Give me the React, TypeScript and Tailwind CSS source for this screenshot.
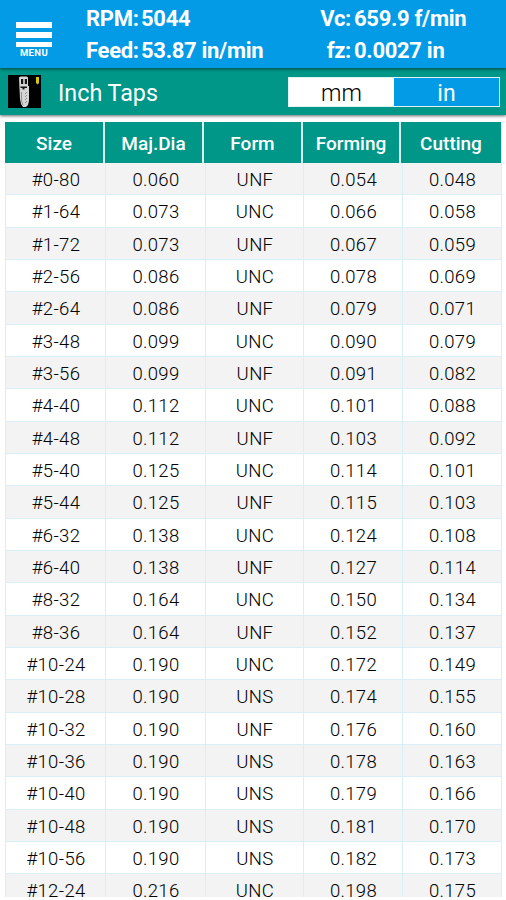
const rows: string[][] = [
  ["#0-80", "0.060", "UNF", "0.054", "0.048"],
  ["#1-64", "0.073", "UNC", "0.066", "0.058"],
  ["#1-72", "0.073", "UNF", "0.067", "0.059"],
  ["#2-56", "0.086", "UNC", "0.078", "0.069"],
  ["#2-64", "0.086", "UNF", "0.079", "0.071"],
  ["#3-48", "0.099", "UNC", "0.090", "0.079"],
  ["#3-56", "0.099", "UNF", "0.091", "0.082"],
  ["#4-40", "0.112", "UNC", "0.101", "0.088"],
  ["#4-48", "0.112", "UNF", "0.103", "0.092"],
  ["#5-40", "0.125", "UNC", "0.114", "0.101"],
  ["#5-44", "0.125", "UNF", "0.115", "0.103"],
  ["#6-32", "0.138", "UNC", "0.124", "0.108"],
  ["#6-40", "0.138", "UNF", "0.127", "0.114"],
  ["#8-32", "0.164", "UNC", "0.150", "0.134"],
  ["#8-36", "0.164", "UNF", "0.152", "0.137"],
  ["#10-24", "0.190", "UNC", "0.172", "0.149"],
  ["#10-28", "0.190", "UNS", "0.174", "0.155"],
  ["#10-32", "0.190", "UNF", "0.176", "0.160"],
  ["#10-36", "0.190", "UNS", "0.178", "0.163"],
  ["#10-40", "0.190", "UNS", "0.179", "0.166"],
  ["#10-48", "0.190", "UNS", "0.181", "0.170"],
  ["#10-56", "0.190", "UNS", "0.182", "0.173"],
  ["#12-24", "0.216", "UNC", "0.198", "0.175"],
];

const columns = ["Size", "Maj.Dia", "Form", "Forming", "Cutting"];

function Reading({ label, value }: { label: string; value: string }) {
  return (
    <div className="flex h-8 items-center gap-[3px]">
      <span className="w-[52px] text-right">{label}</span>
      <span>{value}</span>
    </div>
  );
}

function TapIcon() {
  return (
    <svg viewBox="0 0 33 33" className="h-[33px] w-[33px] bg-black">
      <path d="M11 3q0-1.500 1.500-1.500h6q1.500 0 1.500 1.500v8h1v15l-1 4-2 2h-3l-2-3-1-5z" fill="#d4d4d4" />
      <path d="M13 4h2.200v5h-2.200zM16.800 4h2.200v5h-2.200zM12.500 11.500h6.500v1.500h-2.500v1.500h-2v-1.500h-2z" fill="#151515" />
      <path d="M13.500 17v9l1.500 4M19 17l-2 2M19 20l-2 2M19 23l-2 2M19 26l-2 2" stroke="#8a8a8a" strokeWidth="0.9" fill="none" />
      <path d="M28 2h3v6l-1.500 1.500L28 8z" fill="#d6c413" />
    </svg>
  );
}

export default function App() {
  return (
    <div className="flex h-[900px] w-[506px] flex-col overflow-hidden bg-white font-[Roboto,sans-serif]">
      <header className="z-20 flex h-[68px] shrink-0 bg-[#039be5] text-[22px] font-bold tracking-[-0.3px] text-white shadow-[0_1px_3px_rgba(0,0,0,0.55)]">
        <button className="flex w-[86px] flex-col items-start pt-[22px] pl-4">
          <span className="h-[6px] w-9 bg-white" />
          <span className="mt-[4px] h-[6px] w-9 bg-white" />
          <span className="mt-[4px] h-[5px] w-9 bg-white" />
          <span className="w-9 text-center text-[9.5px] leading-[11px] tracking-[0.4px]">MENU</span>
        </button>
        <div className="w-[213px] pt-[2px] whitespace-nowrap">
          <Reading label="RPM:" value="5044" />
          <Reading label="Feed:" value="53.87 in/min" />
        </div>
        <div className="pt-[2px] whitespace-nowrap">
          <Reading label="Vc:" value="659.9 f/min" />
          <Reading label="fz:" value="0.0027 in" />
        </div>
      </header>

      <div className="z-10 flex h-[47px] shrink-0 items-center bg-[#009688] pr-[6px] pl-2 shadow-[0_1px_3px_rgba(0,0,0,0.6)]">
        <TapIcon />
        <h1 className="ml-[17px] pt-[3px] text-[23.3px] text-white">Inch Taps</h1>
        <div className="ml-auto flex h-[30px] w-[212px] border border-[#e0f2f1] text-[23px] leading-[32px]">
          <span className="h-full flex-1 bg-white text-center font-light text-black">mm</span>
          <span className="h-full flex-1 bg-[#039be5] text-center text-white">in</span>
        </div>
      </div>

      <main className="h-[782px] shrink-0 overflow-hidden pt-[7px] pl-[5px]">
        <div className="grid h-[41px] w-[497px] grid-cols-[100px_99px_99px_98px_101px] text-center text-[19px] font-medium text-white">
          {columns.map((c) => (
            <div key={c} className="h-[41px] border-r-2 border-[#d8f0ee] bg-[#009688] leading-[43px] last:border-r-[1px]">
              {c}
            </div>
          ))}
        </div>
        {rows.map((row) => (
          <div
            key={row[0]}
            className="grid h-[32.33px] w-[497px] grid-cols-[100px_100px_98px_99px_99px] border-b border-l border-[#d9eff8] bg-white text-center text-[18.5px] font-light tracking-[0.35px] text-black even:bg-[#f3f3f3]"
          >
            {row.map((cell, i) => (
              <div key={i} className="h-full border-r border-[#d9eff8] pl-px leading-[34px]">
                {cell}
              </div>
            ))}
          </div>
        ))}
      </main>
    </div>
  );
}
